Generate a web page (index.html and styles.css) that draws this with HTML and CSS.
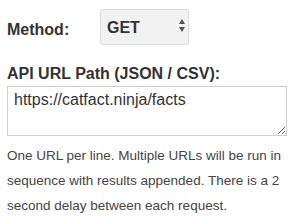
FILE: index.html
```html
<html lang="en">
<head>
    <meta charset="UTF-8">
    <meta name="viewport" content="width=device-width, initial-scale=1.0">
    <title>API Import</title>
    <link rel="stylesheet" href="styles.css">
</head>
<body>
    <div class="form">
        <div class="row">
            <label class="label" for="method">Method:</label>
            <div class="select-wrap">
                <select id="method" class="select">
                    <option>GET</option>
                    <option>POST</option>
                </select>
                <svg class="arrows" width="6" height="14" viewBox="0 0 6 14">
                    <polygon points="3,0 6,5 0,5" fill="#555"/>
                    <polygon points="0,8 6,8 3,13" fill="#555"/>
                </svg>
            </div>
        </div>
        <h3 class="heading">API URL Path (JSON / CSV):</h3>
        <textarea class="urls" id="urls">https://catfact.ninja/facts</textarea>
        <p class="help">One URL per line. Multiple URLs will be run in sequence with results appended. There is a 2 second delay between each request.</p>
    </div>
</body>
</html>
```

FILE: styles.css
```css
body {
    margin: 0;
    background: #fff;
    font-family: "Liberation Sans", Arial, sans-serif;
    color: #333;
}
.form { padding: 9px 7px 0 7px; }
.row { display: flex; align-items: center; height: 36px; }
.label { width: 93px; font-size: 16px; font-weight: bold; padding-top: 5px; }
.select-wrap { position: relative; width: 89px; height: 36px; }
.select {
    appearance: none;
    -webkit-appearance: none;
    width: 100%; height: 100%;
    box-sizing: border-box;
    margin: 0;
    padding: 0 0 0 6px;
    border: 1px solid #dcdcdc;
    border-radius: 3px;
    background: #f2f2f2;
    font-family: inherit;
    font-size: 16px;
    font-weight: bold;
    color: #333;
}
.arrows { position: absolute; left: 79px; top: 10px; pointer-events: none; }
.heading { font-size: 16px; line-height: 18px; margin: 20px 0 3px 0; }
.urls {
    display: block;
    width: 280px; height: 50px;
    box-sizing: border-box;
    margin: 0;
    padding: 4px 6px;
    border: 1px solid #cfcfcf;
    font-family: inherit;
    font-size: 16px;
    color: #333;
}
.help { font-size: 13.5px; line-height: 25px; color: #444; margin: 7px 0 0 0; }
```
